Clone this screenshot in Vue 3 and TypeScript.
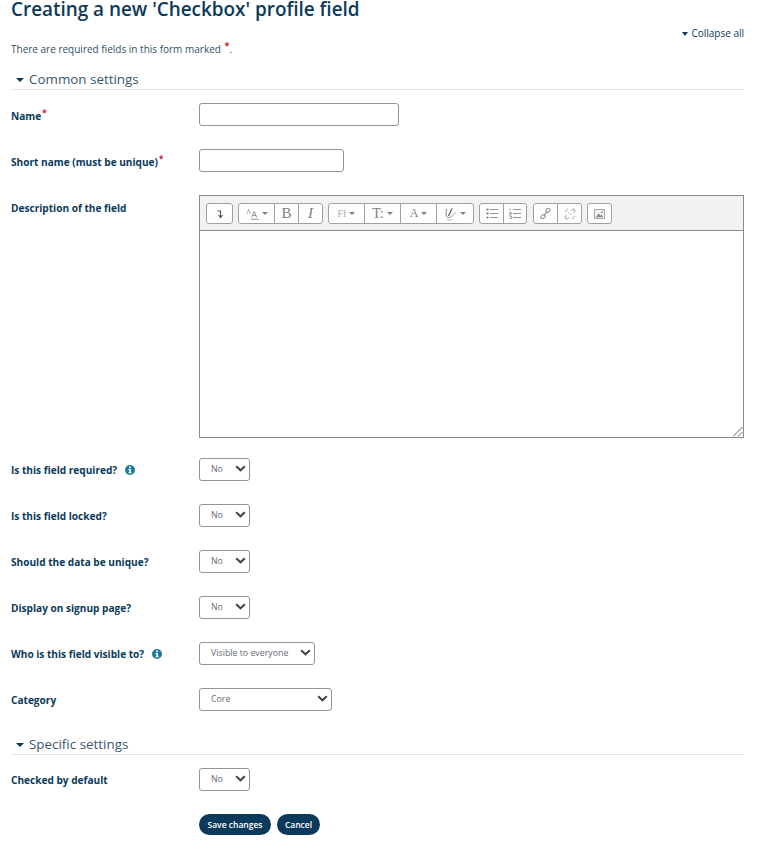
<script setup lang="ts">
interface Row { label: string; value: string; width: number; info?: boolean }
const rowsA: Row[] = [
  { label: 'Is this field required?', value: 'No', width: 51, info: true },
  { label: 'Is this field locked?', value: 'No', width: 51 },
  { label: 'Should the data be unique?', value: 'No', width: 51 },
  { label: 'Display on signup page?', value: 'No', width: 51 },
  { label: 'Who is this field visible to?', value: 'Visible to everyone', width: 116, info: true },
  { label: 'Category', value: 'Core', width: 133 },
]
</script>

<template>
  <div class="page">
    <h1 class="title">Creating a new 'Checkbox' profile field</h1>
    <div class="collapse-line"><a class="collapse"><span class="tri small"></span>Collapse all</a></div>
    <p class="req">There are required fields in this form marked <span class="star big">*</span>.</p>

    <div class="section"><span class="tri"></span>Common settings</div>

    <div class="row first">
      <label class="lab name-lab">Name<span class="star">*</span></label>
      <div class="input w-name"></div>
    </div>
    <div class="row">
      <label class="lab name-lab">Short name (must be unique)<span class="star">*</span></label>
      <div class="input w-short"></div>
    </div>
    <div class="row editor-row">
      <label class="lab desc-lab">Description of the field</label>
      <div class="editor">
        <div class="toolbar">
          <div class="grp">
            <span class="btn w25">
              <svg width="8" height="10" viewBox="0 0 8 10"><path d="M1.500 2H4.500V8M2.500 6 4.500 8.500 6.500 6" fill="none" stroke="#555" stroke-width="1.100"/></svg>
            </span>
          </div>
          <div class="grp">
            <span class="btn w35">
              <svg width="13" height="12" viewBox="0 0 13 12"><path d="M1 6 2.800 1 4 6" fill="none" stroke="#a5a5a5" stroke-width=".8"/><path d="M5.500 9.500 8.200 3.500 10.800 9.500M6.800 7.500h3M5 11.300h7.500" fill="none" stroke="#888" stroke-width=".9"/></svg>
              <i class="caret"></i>
            </span>
            <span class="btn w24 serif big-glyph">B</span>
            <span class="btn w24 serif big-glyph ital">I</span>
          </div>
          <div class="grp">
            <span class="btn w35 serif ff">Ff<i class="caret"></i></span>
            <span class="btn w36 serif tt">T:<i class="caret"></i></span>
            <span class="btn w36 serif aa">A<i class="caret"></i></span>
            <span class="btn w37">
              <svg width="13" height="14" viewBox="0 0 13 14"><path d="M2.500 2 2 7.500C2 10 4 11 5.500 10.500 7.500 9.800 9 7.500 11.500 5.500" fill="none" stroke="#888" stroke-width="1"/><path d="M4.500 9 8 1.500" stroke="#666" stroke-width="1.400"/><path d="M3 12.800H8" stroke="#bbb" stroke-width="1"/></svg>
              <i class="caret"></i>
            </span>
          </div>
          <div class="grp">
            <span class="btn w23">
              <svg width="12" height="11" viewBox="0 0 12 11"><path d="M.500 1.500h2M.500 5.500h2M.500 9.500h2" stroke="#666" stroke-width="1.500"/><path d="M4 1.500H12M4 5.500H12M4 9.500H12" stroke="#888" stroke-width=".9"/></svg>
            </span>
            <span class="btn w23">
              <svg width="12" height="11" viewBox="0 0 12 11"><path d="M1 .5v2.500M.5 4.500h2v1.200h-2V7.200h2M.5 8.500h2.200v2H.5" fill="none" stroke="#777" stroke-width=".7"/><path d="M4 1.500H12M4 5.500H12M4 9.500H12" stroke="#888" stroke-width=".9"/></svg>
            </span>
          </div>
          <div class="grp gap-extra">
            <span class="btn w23">
              <svg width="11" height="11" viewBox="0 0 12 12"><g fill="none" stroke="#888" stroke-width="1.100"><rect x="6.200" y=".8" width="5" height="3.400" rx="1.600" transform="rotate(-45 8.700 2.500)"/><rect x=".8" y="7.800" width="5" height="3.400" rx="1.600" transform="rotate(-45 3.300 9.500)"/><path d="M4.500 7.500 7.500 4.500"/></g></svg>
            </span>
            <span class="btn w24">
              <svg width="12" height="12" viewBox="0 0 13 13"><g fill="none" stroke="#888" stroke-width="1"><path d="M7.500 3 9 1.500a1.800 1.800 0 0 1 2.500 2.500L10 5.500M5.500 10 4 11.500A1.800 1.800 0 0 1 1.500 9L3 7.500"/><path d="M3.500 1v2M1 3.500h2M9.500 12v-2M12 9.500h-2M5 5l3 3" stroke-dasharray="1.500 1"/></g></svg>
            </span>
          </div>
          <div class="grp">
            <span class="btn w23">
              <svg width="11" height="10" viewBox="0 0 13 12"><rect x=".6" y=".6" width="11.800" height="10.800" fill="#f5f5f5" stroke="#999" stroke-width="1"/><path d="M2 10 5.500 5l2 3 1.500-1.500L11 10z" fill="#888"/><circle cx="9.500" cy="3.500" r="1.100" fill="#888"/></svg>
            </span>
          </div>
        </div>
        <div class="textarea">
          <svg class="grip" width="11" height="11" viewBox="0 0 11 11"><path d="M10.500 1 1 10.500M10.500 6 6 10.500" stroke="#666" stroke-width="1"/></svg>
        </div>
      </div>
    </div>

    <div v-for="r in rowsA" :key="r.label" class="row">
      <label class="lab sel-lab">{{ r.label }}
        <svg v-if="r.info" class="info" width="10" height="10" viewBox="0 0 10 10"><circle cx="5" cy="5" r="5" fill="#1d7a9c"/><rect x="4.100" y="1.500" width="1.800" height="1.700" fill="#fff"/><path d="M3.500 4h2.400v3.300h.8v1H3.500v-1h.8V5h-.8z" fill="#fff"/></svg>
      </label>
      <div class="select" :style="{ width: r.width + 'px' }">
        <span>{{ r.value }}</span>
        <svg class="chev" width="11" height="7" viewBox="0 0 11 7"><path d="M1.200 1.200 5.500 5.300l4.300-4.100" fill="none" stroke="#444" stroke-width="2"/></svg>
      </div>
    </div>

    <div class="section second"><span class="tri"></span>Specific settings</div>

    <div class="row first">
      <label class="lab sel-lab">Checked by default</label>
      <div class="select w-no">
        <span>No</span>
        <svg class="chev" width="11" height="7" viewBox="0 0 11 7"><path d="M1.200 1.200 5.500 5.300l4.300-4.100" fill="none" stroke="#444" stroke-width="2"/></svg>
      </div>
    </div>

    <div class="actions">
      <button class="pill">Save changes</button>
      <button class="pill">Cancel</button>
    </div>
  </div>
</template>

<style>
html, body { margin: 0; background: #fff; }
</style>

<style scoped>
.page {
  box-sizing: border-box;
  width: 782px;
  height: 853px;
  padding: 0 38px 0 11px;
  font-family: "Open Sans", sans-serif;
  color: #0b3a5b;
  overflow: hidden;
}
.title {
  margin: 0;
  font-size: 18.9px;
  line-height: 18px;
  font-weight: 600;
  color: #0b3a5b;
}
.collapse-line {
  display: flex;
  justify-content: flex-end;
  margin-top: 8px;
  height: 15px;
}
.collapse {
  font-size: 10px;
  line-height: 15px;
  display: flex;
  align-items: center;
  gap: 3px;
}
.req {
  margin: 0;
  font-size: 10px;
  line-height: 16px;
  color: #33505f;
}
.star { color: #c3202c; font-size: 8px; font-weight: 700; position: relative; top: -4px; margin-left: 1px; }
.star.big { font-size: 9px; top: -4px; margin-left: 1px; }
.tri {
  display: inline-block;
  width: 0;
  height: 0;
  border-left: 4px solid transparent;
  border-right: 4px solid transparent;
  border-top: 4px solid #0b3a5b;
  margin: 0 5px;
  vertical-align: middle;
}
.tri.small { border-width: 4px 3px 0; margin: 0; }
.section {
  margin-top: 12px;
  height: 19px;
  line-height: 18px;
  font-size: 13.4px;
  border-bottom: 1px solid #e3e3e3;
  color: #3b566a;
}
.section.second { height: 20px; margin-top: 0; line-height: 20px; }
.row {
  display: flex;
  align-items: flex-start;
  margin-bottom: 23px;
}
.row.first { margin-top: 13px; }
.row.editor-row { margin-bottom: 20px; }
.lab {
  flex: 0 0 188px;
  font-size: 10.1px;
  font-weight: 700;
  line-height: 16px;
  color: #0b3a5b;
  white-space: nowrap;
}
.name-lab, .desc-lab { padding-top: 5px; }
.sel-lab { padding-top: 4px; }
.info { margin-left: 5px; vertical-align: -1px; }
.input {
  box-sizing: border-box;
  height: 23px;
  border: 1px solid #8f959e;
  border-radius: 3px;
  background: #fff;
}
.w-name { width: 200px; }
.w-short { width: 145px; }
.w-no { width: 51px; }
.editor {
  box-sizing: border-box;
  width: 545px;
  height: 243px;
  border: 1px solid #8b8b8b;
  display: flex;
  flex-direction: column;
}
.toolbar {
  box-sizing: border-box;
  height: 35px;
  flex: none;
  background: #f2f2f2;
  border-bottom: 1px solid #8b8b8b;
  padding: 7px 0 0 6px;
  display: flex;
  gap: 5px;
  align-items: flex-start;
}
.grp {
  display: flex;
  height: 21px;
  box-sizing: border-box;
  border: 1px solid #a0a0a0;
  border-radius: 3px;
  background: #fff;
}
.gap-extra { margin-left: 1px; }
.btn {
  box-sizing: border-box;
  height: 19px;
  display: flex;
  align-items: center;
  justify-content: center;
  gap: 3px;
  color: #808080;
  border-left: 1px solid #a0a0a0;
}
.btn:first-child { border-left: 0; }
.w23 { width: 23px; }
.w24 { width: 24px; }
.w25 { width: 25px; }
.w35 { width: 35px; }
.w36 { width: 36px; }
.w37 { width: 37px; }
.serif { font-family: "Liberation Serif", serif; }
.big-glyph { font-size: 15px; }
.ital { font-style: italic; }
.ff { font-size: 10px; color: #aaa; }
.tt { font-size: 14px; }
.aa { font-size: 12px; }
.caret {
  display: inline-block;
  width: 0;
  height: 0;
  border-left: 3px solid transparent;
  border-right: 3px solid transparent;
  border-top: 3px solid #808080;
}
.textarea { flex: 1; position: relative; background: #fff; }
.grip { position: absolute; right: 0; bottom: 0; }
.select {
  box-sizing: border-box;
  height: 23px;
  border: 1px solid #8f959e;
  border-radius: 3px;
  background: #fff;
  padding-left: 11px;
  font-size: 8.8px;
  line-height: 21px;
  color: #5f6b75;
  position: relative;
}
.chev { position: absolute; right: 3px; top: 6px; }
.actions {
  display: flex;
  gap: 6px;
  margin: 0 0 0 188px;
}
.pill {
  height: 21px;
  border: 0;
  border-radius: 11px;
  background: #0b3a5b;
  color: #fff;
  font-family: "Open Sans", sans-serif;
  font-size: 8.5px;
  font-weight: 600;
  padding: 0;
}
.pill:first-child { width: 72px; }
.pill:last-child { width: 43px; }
</style>
